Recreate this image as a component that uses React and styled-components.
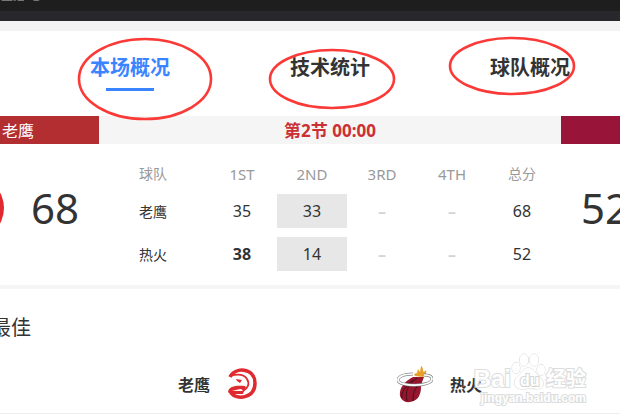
import React from 'react';
import styled, { createGlobalStyle } from 'styled-components';

const GlobalStyle = createGlobalStyle`
  * {
    box-sizing: border-box;
  }

  body {
    margin: 0;
    overflow: hidden;
    background: #fff;
    color: #333;
    font-family: 'Noto Sans', 'Noto Sans CJK SC', sans-serif;
    font-size: 16px;
  }

  button {
    font-family: inherit;
  }
`;

const Page = styled.div`
  position: relative;
  min-height: 100vh;
  overflow: hidden;
`;

const TopBar = styled.header`
  height: 21px;
  overflow: hidden;
  background: #1e1e1f;
  border-bottom: 10px solid #28272c;
  color: #888;
  font-size: 12px;
  line-height: 16px;

  span {
    display: block;
    margin: -12px 0 0 1px;
  }
`;

const TabBar = styled.nav`
  display: flex;
  justify-content: center;
  height: 95px;
  padding-left: 40px;
  border-top: 10px solid #f3f3f3;
`;

const TabList = styled.div`
  position: relative;
  display: flex;
  flex: none;
  align-items: flex-start;
`;

const Tab = styled.button`
  display: flex;
  flex-direction: column;
  align-items: center;
  gap: 5px;
  width: 200px;
  padding: 22px 0 0;
  border: 0;
  background: none;
  color: ${({ $active }) => ($active ? '#3b84ff' : '#333')};
  font-size: 20px;
  font-weight: bold;
  line-height: 30px;

  &::after {
    content: '';
    width: 48px;
    height: 3px;
    background: ${({ $active }) => ($active ? '#3b84ff' : 'transparent')};
  }
`;

const Marks = styled.svg`
  position: absolute;
  top: 0;
  left: 0;
  overflow: visible;
  pointer-events: none;
  fill: none;
  stroke: #fb3a38;
  stroke-width: 2.6;
`;

const StatusBar = styled.div`
  display: flex;
  height: 28px;
  background: #f5f5f5;
  line-height: 30px;
`;

const TeamTag = styled.div`
  flex: 0 0 ${({ $width }) => $width}px;
  padding-left: 2px;
  background: ${({ $color }) => $color};
  color: #fff;
`;

const Clock = styled.div`
  flex: 1;
  color: #cb3134;
  font-size: 17px;
  font-weight: bold;
  text-align: center;
`;

const Board = styled.section`
  display: flex;
  align-items: flex-start;
  padding: 10px 0 5px;
  border-bottom: 4px solid #f5f5f5;
`;

const Side = styled.div`
  display: flex;
  flex: 0 0 ${({ $width }) => $width}px;
  align-items: center;
  justify-content: ${({ $end }) => ($end ? 'flex-end' : 'flex-start')};
  min-width: 0;
  height: 108px;
  padding: ${({ $end }) => ($end ? '0 20px 0 0' : '0 0 0 20px')};

  svg {
    flex: none;
    margin-right: 27px;
  }
`;

const Total = styled.strong`
  flex: none;
  font-size: 42px;
  font-weight: normal;
  line-height: 60px;
`;

const Periods = styled.div`
  flex: 1;
  min-width: 0;
  padding-right: 4px;
`;

const ScoreTable = styled.table`
  width: 100%;
  border-spacing: 0 9px;
  table-layout: fixed;
  text-align: center;

  th,
  td {
    width: 70px;
    padding: 0;
    line-height: 22px;
  }

  th {
    color: #999;
    font-size: 15px;
    font-weight: normal;
  }

  th:first-child {
    width: auto;
    font-size: 14px;
  }

  th:last-child {
    font-size: 14px;
  }

  tbody th {
    padding-top: 2px;
    color: #333;
  }
`;

const Cell = styled.td`
  height: 34px;
  background: ${({ $current }) => ($current ? '#e7e7e7' : 'none')};
  color: ${({ $empty }) => ($empty ? '#d5d5d5' : '#333')};
  font-weight: ${({ $bold }) => ($bold ? 'bold' : 'normal')};
`;

const Heading = styled.h2`
  margin: 22px 0 0 -9px;
  font-size: 20px;
  font-weight: normal;
  line-height: 34px;
`;

const TeamRow = styled.div`
  display: flex;
  justify-content: center;
  gap: 138px;
  height: 69px;
  padding: 9px 0 0 40px;
  border-bottom: 1px solid #eee;
`;

const Team = styled.div`
  display: flex;
  align-items: center;
  gap: 17px;
  flex-direction: ${({ $reverse }) => ($reverse ? 'row-reverse' : 'row')};
  font-weight: bold;
`;

const Watermark = styled.div`
  position: absolute;
  top: 350px;
  right: 34px;
  color: #fff;
  font-family: 'Liberation Sans', 'Noto Sans CJK SC', sans-serif;
  font-weight: bold;
  opacity: 0.8;
  pointer-events: none;
  paint-order: stroke fill;
  -webkit-text-stroke: 2px #d5d5d5;
`;

const WatermarkLogo = styled.div`
  display: flex;
  align-items: flex-end;
  height: 40px;
  font-size: 24px;
  line-height: 22px;

  span:last-child {
    font-size: 20px;
  }
`;

const WatermarkSite = styled.div`
  font-size: 12px;
  line-height: 16px;
  text-align: right;
`;

const TABS = ['本场概况', '技术统计', '球队概况'];
const PERIODS = ['1ST', '2ND', '3RD', '4TH'];
const SCORES = [
  { team: '老鹰', quarters: [35, 33, null, null], total: 68 },
  { team: '热火', quarters: [38, 14, null, null], total: 52 },
];
const CURRENT = 1;
const BEST = 38;

const HawksLogo = () => (
  <svg width="32" height="32" viewBox="0 0 32 32" aria-hidden="true">
    <path
      d="M3 9C7 -1 28 -1 28 15C28 31 9 32 4 25"
      fill="none"
      stroke="#df2a30"
      strokeWidth="3.5"
    />
    <path
      d="M3 8C10 6 17 6 20 11C23 16 21 20 16 23"
      fill="none"
      stroke="#df2a30"
      strokeWidth="1.8"
    />
    <path
      d="M1 24C2 19 6 17 18 18C20 20 18 22 16 24C16 22 15 21 13 21L5 23L17 23L16 26L3 26Z"
      fill="#df2a30"
    />
    <path d="M9 11L15 12L13 15L10 13Z" fill="#df2a30" />
  </svg>
);

const HeatLogo = () => (
  <svg width="36" height="38" viewBox="0 0 36 38" aria-hidden="true">
    <path
      d="M17 9L20 8L21 4L23 7L24 1C27 3 25 5 27 7L29 5C30 9 28 11 26 12L18 11Z"
      fill="#e9a029"
    />
    <path
      d="M16 12C10 15 4 20 3 27C2 33 6 38 13 37C22 36 24 28 24 22C24 18 26 15 27 12Z"
      fill="#97162d"
    />
    <path
      d="M20 13C10 20 8 27 10 36M24 18C17 23 16 29 16 36M16 15C8 22 4 27 5 33"
      fill="none"
      stroke="#42101b"
      strokeWidth="1"
    />
    <path
      d="M16 9C6 9 1 12 1 15C1 22 35 22 35 14C35 11 31 10 27 10"
      fill="none"
      stroke="#888"
      strokeWidth="3"
    />
    <path
      d="M16 9C6 9 1 12 1 15C1 22 35 22 35 14C35 11 31 10 27 10"
      fill="none"
      stroke="#fff"
      strokeWidth="1.7"
    />
  </svg>
);

const Paw = () => (
  <svg width="35" height="38" viewBox="0 0 35 38" aria-hidden="true">
    <g fill="#fff" stroke="#ccc">
      <ellipse cx="5" cy="16" rx="4" ry="5.5" />
      <ellipse cx="13" cy="8" rx="4.5" ry="6" />
      <ellipse cx="23" cy="8" rx="4.5" ry="6" />
      <ellipse cx="30" cy="18" rx="4" ry="5.5" />
      <path d="M17 16C12 16 11 21 7 24C2 28 2 36 9 37C14 37 21 36 26 37C34 37 34 29 28 24C24 21 23 16 17 16Z" />
    </g>
    <text
      x="9"
      y="34"
      fontSize="16"
      fill="#fff"
      stroke="#ccc"
      strokeWidth="2"
    >
      du
    </text>
  </svg>
);

class App extends React.Component {
  constructor() {
    super();
    this.state = { active: TABS[0] };
  }

  render() {
    const { active } = this.state;

    return (
      <Page>
        <GlobalStyle />
        <TopBar>
          <span>直播 吧</span>
        </TopBar>
        <TabBar>
          <TabList>
            {TABS.map(tab => (
              <Tab
                key={tab}
                type="button"
                $active={tab === active}
                onClick={() => this.setState({ active: tab })}
              >
                {tab}
              </Tab>
            ))}
            <Marks width="600" height="85" aria-hidden="true">
              <ellipse cx="115" cy="48" rx="66" ry="40" />
              <ellipse cx="302" cy="48" rx="62" ry="29" />
              <ellipse cx="482" cy="35" rx="62" ry="28" />
            </Marks>
          </TabList>
        </TabBar>
        <StatusBar>
          <TeamTag $width={99} $color="#b32e31">
            老鹰
          </TeamTag>
          <Clock>第2节 00:00</Clock>
          <TeamTag $width={59} $color="#981539" />
        </StatusBar>
        <Board>
          <Side $width={99} $end>
            <svg width="64" height="64" viewBox="0 0 64 64" aria-hidden="true">
              <circle cx="32" cy="32" r="32" fill="#e12a30" />
            </svg>
            <Total>68</Total>
          </Side>
          <Periods>
            <ScoreTable>
              <thead>
                <tr>
                  <th scope="col">球队</th>
                  {PERIODS.map(period => (
                    <th key={period} scope="col">
                      {period}
                    </th>
                  ))}
                  <th scope="col">总分</th>
                </tr>
              </thead>
              <tbody>
                {SCORES.map(({ team, quarters, total }) => (
                  <tr key={team}>
                    <th scope="row">{team}</th>
                    {quarters.map((score, i) => (
                      <Cell
                        key={PERIODS[i]}
                        $current={i === CURRENT}
                        $empty={score === null}
                        $bold={score === null || score === BEST}
                      >
                        {score === null ? '–' : score}
                      </Cell>
                    ))}
                    <Cell>{total}</Cell>
                  </tr>
                ))}
              </tbody>
            </ScoreTable>
          </Periods>
          <Side $width={59}>
            <Total>52</Total>
          </Side>
        </Board>
        <Heading>最佳</Heading>
        <TeamRow>
          <Team>
            老鹰
            <HawksLogo />
          </Team>
          <Team $reverse>
            热火
            <HeatLogo />
          </Team>
        </TeamRow>
        <Watermark aria-hidden="true">
          <WatermarkLogo>
            <span>Bai</span>
            <Paw />
            <span>经验</span>
          </WatermarkLogo>
          <WatermarkSite>jingyan.baidu.com</WatermarkSite>
        </Watermark>
      </Page>
    );
  }
}

export default App;
